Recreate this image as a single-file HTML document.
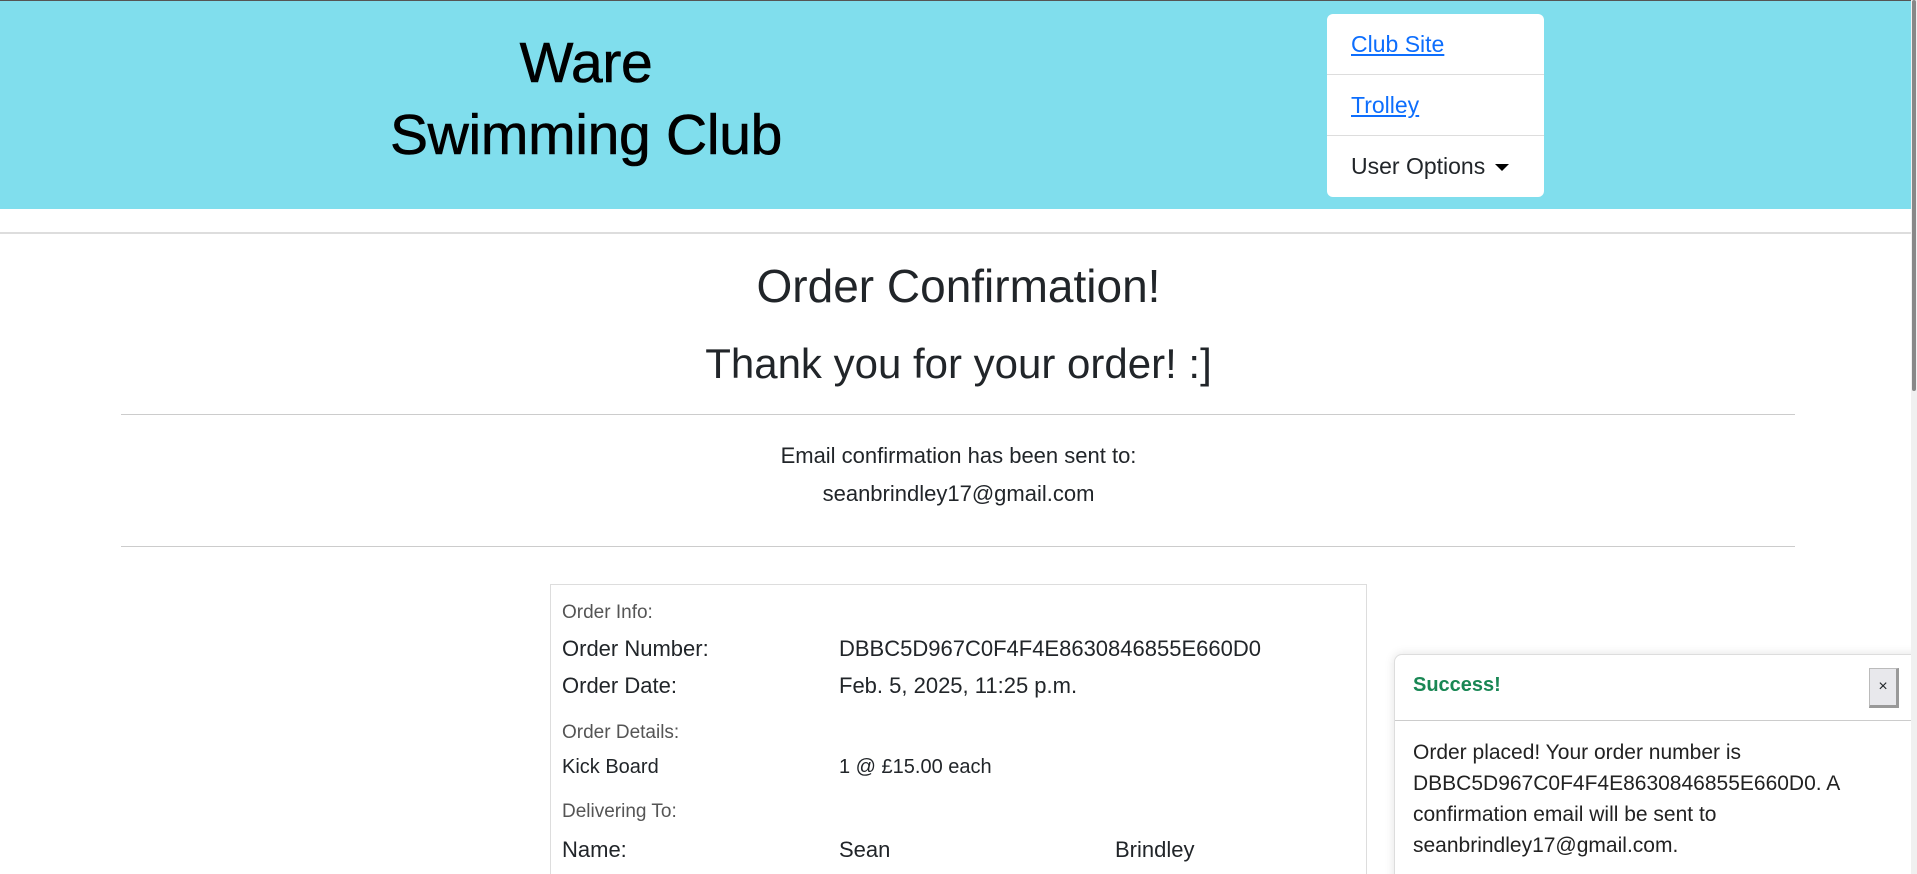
<!DOCTYPE html>
<html><head><meta charset="utf-8"><style>
*{box-sizing:border-box;margin:0;padding:0}
html,body{width:1917px;height:874px;overflow:hidden;background:#fff;font-family:"Liberation Sans",sans-serif;color:#212529}
#w{position:relative;width:1917px;height:874px;overflow:hidden}
.hdr{position:absolute;left:0;top:0;width:1911px;height:209px;background:#80deed;border-top:1px solid #555}
.title{position:absolute;left:286px;width:600px;top:26px;text-align:center;font-size:57px;line-height:72px;color:#000;letter-spacing:-0.3px;-webkit-text-stroke:0.6px #000}
.nav{position:absolute;left:1327px;top:13px;width:217px;height:183px;background:#fff;border-radius:6px}
.nav div{height:61px;border-bottom:1px solid #ddd;padding-left:24px;line-height:60px;font-size:23px}
.nav div:last-child{border:none}
.nav a{color:#0d6efd;text-decoration:underline}
.caret{display:inline-block;border-left:7px solid transparent;border-right:7px solid transparent;border-top:7px solid #000;vertical-align:middle;margin-left:10px}
.line{position:absolute;left:0;width:1911px;top:232px;border-top:2px solid #ddd}
.sb{position:absolute;right:0;top:0;width:6px;height:874px;background:#f0f0f0}
.sb div{width:4px;margin-left:1px;height:391px;background:#888;border-radius:2px}
.c{position:absolute;left:0;width:1917px;text-align:center}
.hr{position:absolute;left:121px;width:1674px;border-top:1px solid #ccc}
.card{position:absolute;left:550px;top:584px;width:817px;height:330px;border:1px solid #ddd}
.r{position:absolute;font-size:22px}
.g{color:#555;font-size:19px}
.toast{position:absolute;left:1394px;top:654px;width:530px;height:260px;background:#fff;border:1px solid #ddd;border-radius:8px;box-shadow:0 0 10px rgba(0,0,0,.12)}
.th{height:66px;border-bottom:1px solid #ccc;position:relative}
.th b{position:absolute;left:18px;top:19px;color:#198754;font-size:20px}
.x{position:absolute;left:474px;top:13px;width:30px;height:40px;background:#e8e8ec;border:1px solid #bbb;border-right:3px solid #999;border-bottom:3px solid #999;text-align:center;line-height:36px;font-size:16px}
.tb{padding:16px 18px;font-size:21px;line-height:31px;color:#222}
</style></head><body><div id="w">
<div class="hdr">
<div class="title">Ware<br>Swimming Club</div>
<div class="nav"><div><a>Club Site</a></div><div><a>Trolley</a></div><div>User Options<span class="caret"></span></div></div>
</div>
<div class="line"></div>
<div class="c" style="top:258px;font-size:46px;line-height:56px">Order Confirmation!</div>
<div class="c" style="top:338px;font-size:42px;line-height:52px">Thank you for your order! :]</div>
<div class="hr" style="top:414px"></div>
<div class="c" style="top:437px;font-size:22px;line-height:38px">Email confirmation has been sent to:<br>seanbrindley17@gmail.com</div>
<div class="hr" style="top:546px"></div>
<div class="card"></div>
<div class="r g" style="left:562px;top:602px">Order Info:</div>
<div class="r" style="left:562px;top:636px">Order Number:</div>
<div class="r" style="left:839px;top:636px">DBBC5D967C0F4F4E8630846855E660D0</div>
<div class="r" style="left:562px;top:673px">Order Date:</div>
<div class="r" style="left:839px;top:673px">Feb. 5, 2025, 11:25 p.m.</div>
<div class="r g" style="left:562px;top:722px">Order Details:</div>
<div class="r" style="left:562px;top:756px;font-size:20px">Kick Board</div>
<div class="r" style="left:839px;top:756px;font-size:20px">1 @ £15.00 each</div>
<div class="r g" style="left:562px;top:801px">Delivering To:</div>
<div class="r" style="left:562px;top:837px">Name:</div>
<div class="r" style="left:839px;top:837px">Sean</div>
<div class="r" style="left:1115px;top:837px">Brindley</div>
<div class="toast"><div class="th"><b>Success!</b><div class="x">×</div></div>
<div class="tb">Order placed! Your order number is DBBC5D967C0F4F4E8630846855E660D0. A confirmation email will be sent to seanbrindley17@gmail.com.</div></div>
<div class="sb"><div></div></div>
</div></body></html>
